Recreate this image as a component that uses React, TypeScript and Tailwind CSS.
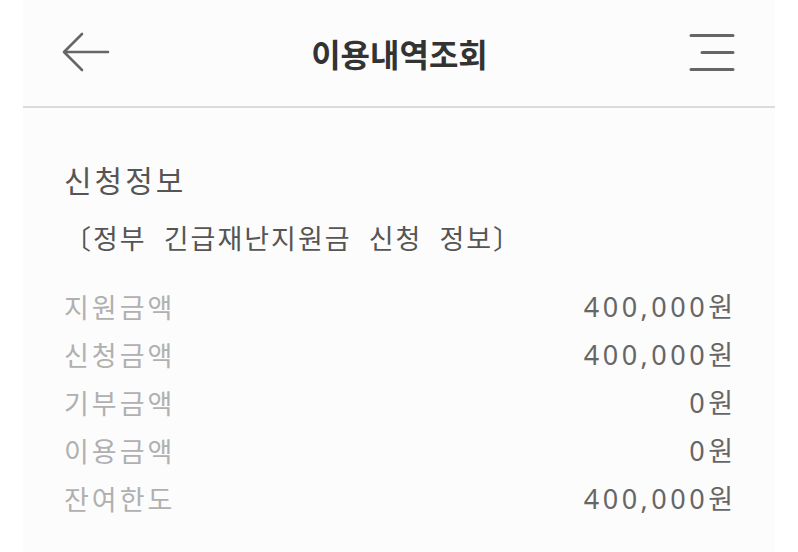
const rows = [
  { label: '지원금액', value: '400,000' },
  { label: '신청금액', value: '400,000' },
  { label: '기부금액', value: '0' },
  { label: '이용금액', value: '0' },
  { label: '잔여한도', value: '400,000' },
]

export default function App() {
  return (
    <div className="h-[552px] w-[798px] bg-white" style={{ fontFamily: '"Noto Sans CJK KR", sans-serif' }}>
      <div className="mx-[23px] h-full bg-[#fcfcfc]">
        <div className="flex h-[108px] items-center justify-between border-b-2 border-[#dcdcdc] pl-[39px] pr-[38px]">
          <svg width="48" height="42" viewBox="0 0 48 42" fill="none" stroke="#666" strokeWidth="2.6" strokeLinecap="round" strokeLinejoin="round">
            <path d="M2 20h44M20 2L2 20l18 18" />
          </svg>
          <h1 className="text-[32px] font-bold leading-none text-[#333]">이용내역조회</h1>
          <svg width="48" height="42" viewBox="0 0 48 42" fill="none" stroke="#666" strokeWidth="3" strokeLinecap="round">
            <path d="M2 3.5h42M13 20.5h31M2 37.5h42" />
          </svg>
        </div>
        <div className="pl-[41px] pr-[42px] pt-[51px]">
          <h2 className="text-[30px] leading-[40px] tracking-[3px] text-[#555]">신청정보</h2>
          <p className="mt-[19px] text-[27px] leading-[40px] tracking-[2px] [word-spacing:9px] text-[#555]">〔정부 긴급재난지원금 신청 정보〕</p>
          <div className="mt-[25px]">
            {rows.map((r) => (
              <div key={r.label} className="flex h-[48px] items-center justify-between">
                <span className="text-[27px] tracking-[3px] text-[#b0b0b0]">{r.label}</span>
                <span className="text-[27px] text-[#666]">
                  <span className="text-[27px] tracking-[3.5px]" style={{ fontFamily: '"Noto Sans", sans-serif' }}>{r.value}</span>
                  원
                </span>
              </div>
            ))}
          </div>
        </div>
      </div>
    </div>
  )
}
